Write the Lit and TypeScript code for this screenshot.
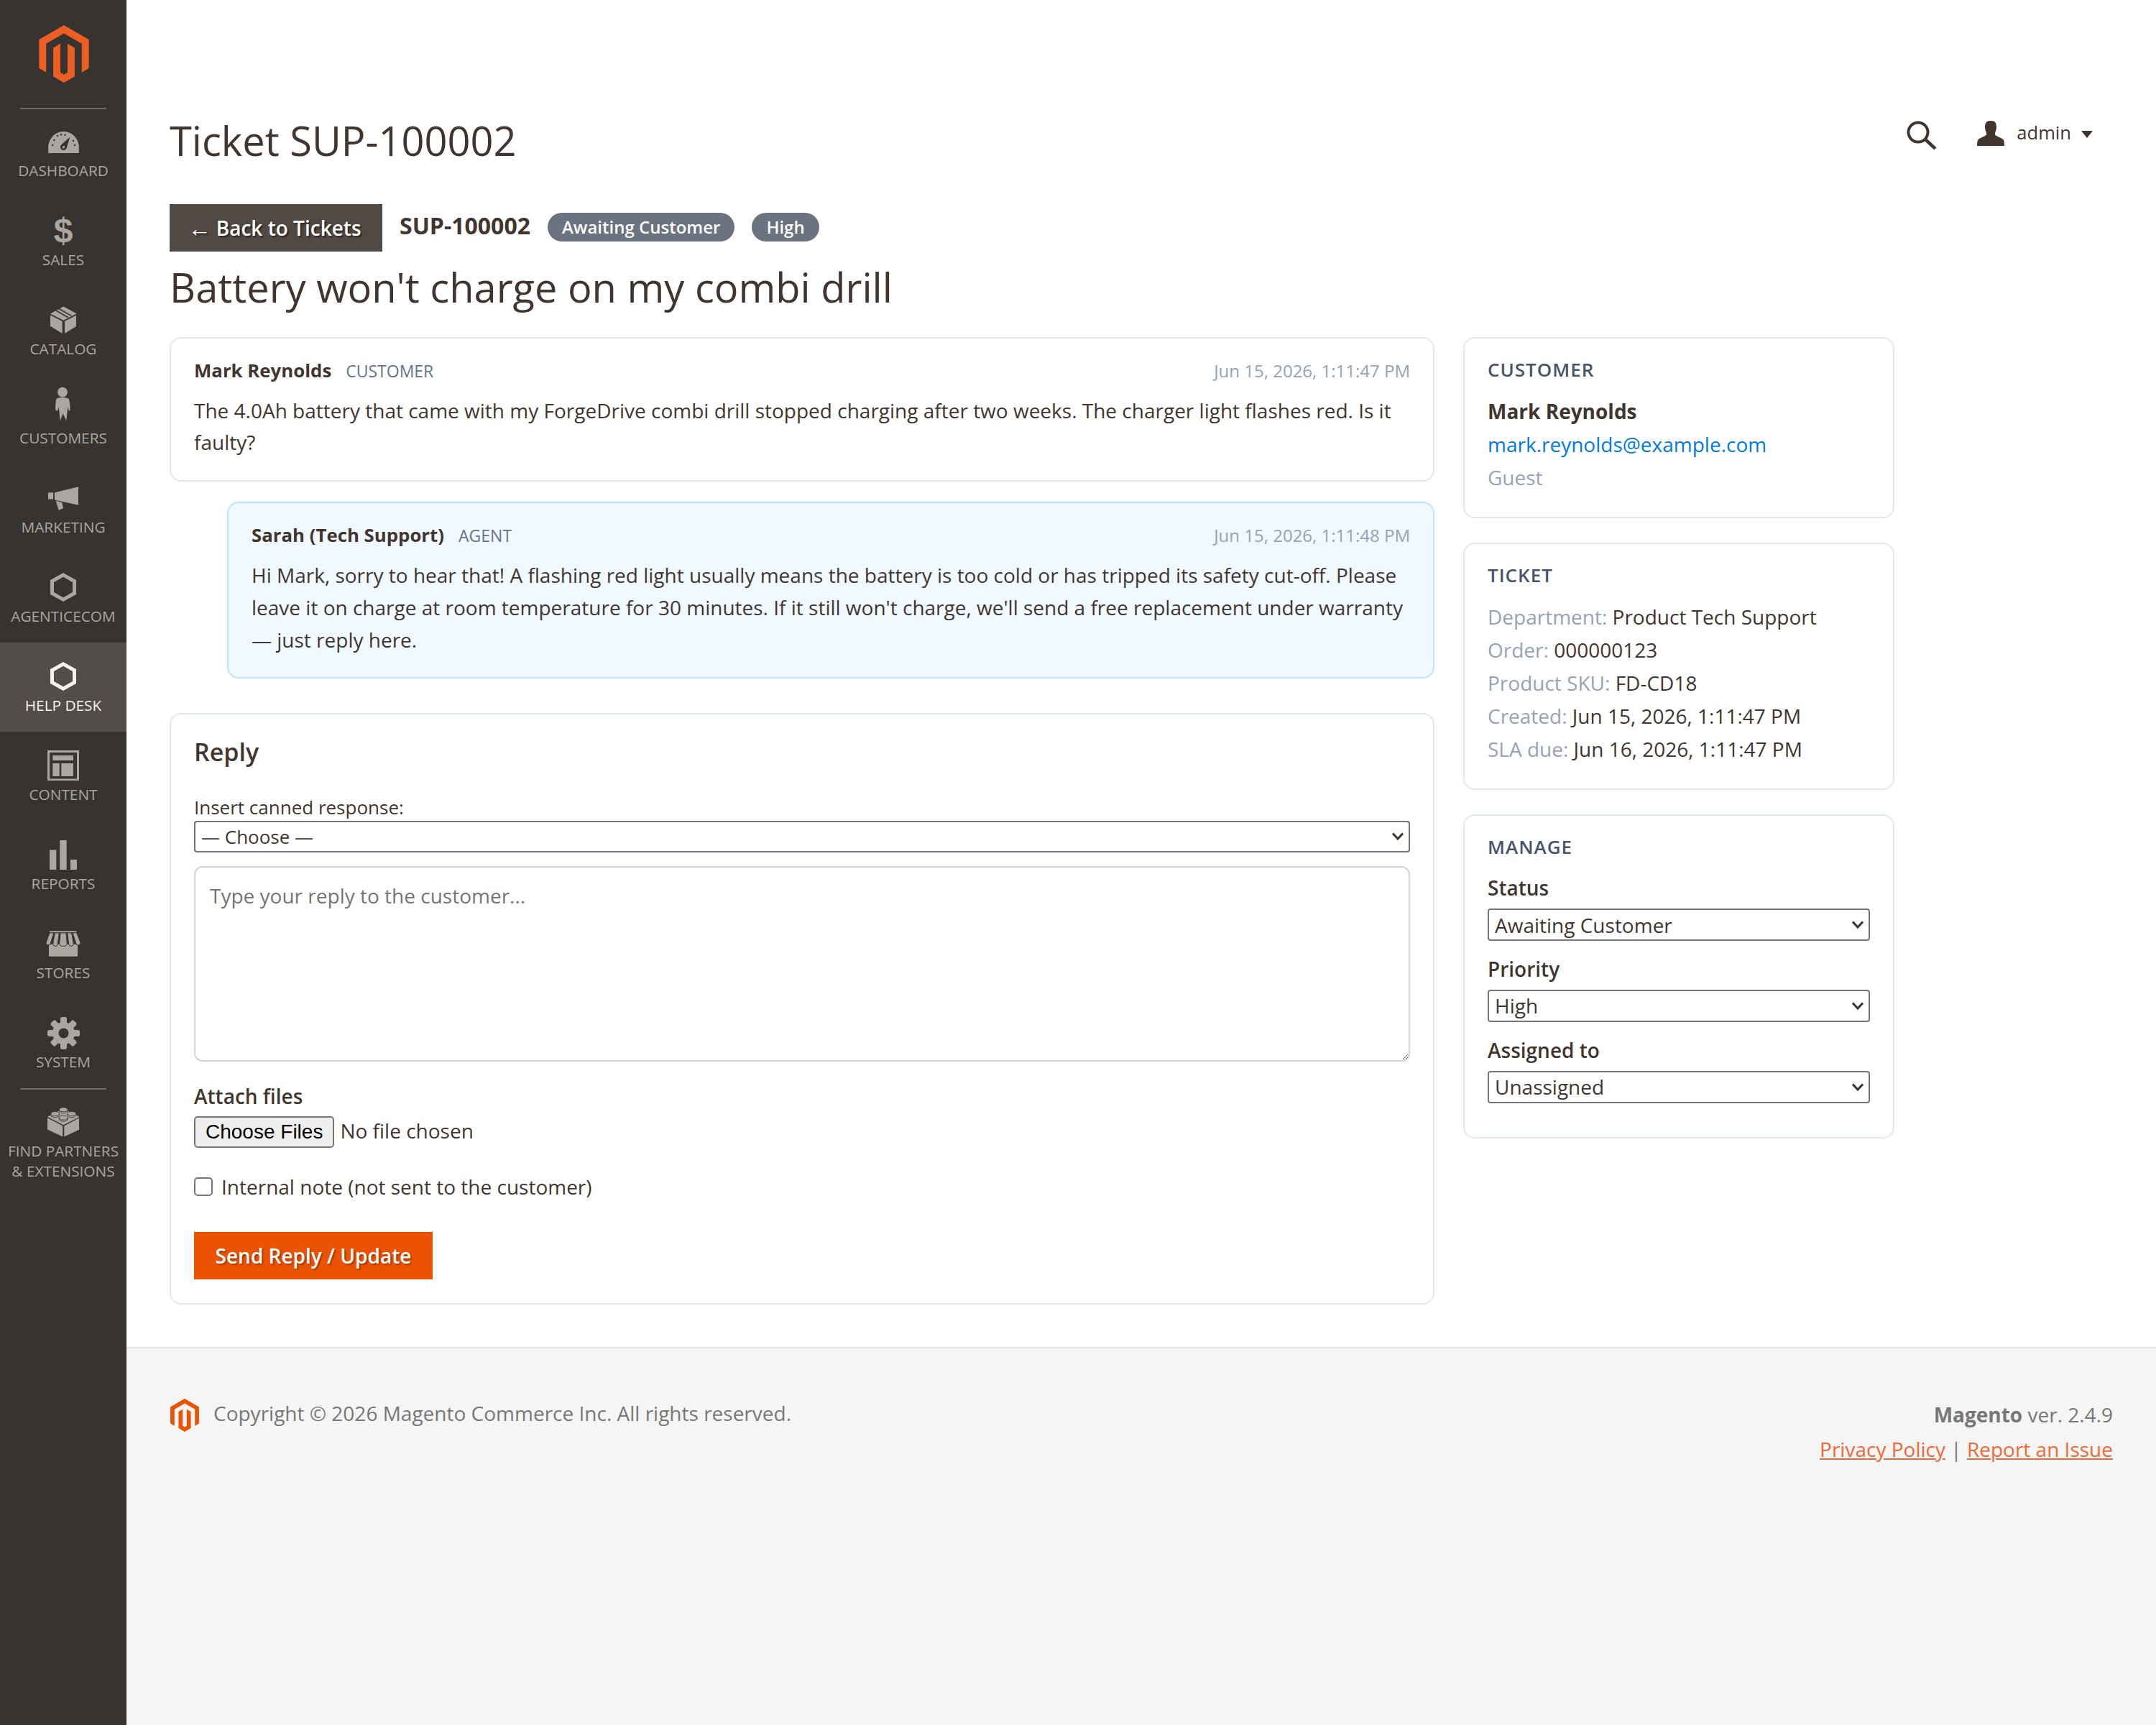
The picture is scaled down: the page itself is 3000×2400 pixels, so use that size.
import { LitElement, html, css, svg } from "lit";
import { customElement } from "lit/decorators.js";

const MAG = "M12 24l-4.455-2.572v-12l2.97-1.715v12.001l1.485.902 1.485-.902V7.713l2.971 1.715v12L12 24zM22.391 6v12l-2.969 1.714V7.713L12 3.43 4.574 7.713v12L1.609 18V6L12 0l10.391 6z";
const BG = "#373330";
const stud = (cx: number, cy: number) => svg`<path fill="currentColor" stroke="${BG}" stroke-width="2.500" d="M${cx - 18} ${cy}v6a18 9 0 0 0 36 0v-6a18 9 0 0 0-36 0a18 9 0 0 0 36 0"/>`;
const teeth = [0, 45, 90, 135, 180, 225, 270, 315];

const icons: Record<string, any> = {
  dash: svg`<svg viewBox="0 0 44 32" width="21.500" height="15.500"><path fill="currentColor" d="M0 32V21C2 9 11 1 22 1s20 8 22 20v11z"/><g fill="${BG}"><circle cx="6" cy="20.700" r="1.300"/><circle cx="8.400" cy="13.500" r="1.300"/><circle cx="13.400" cy="7.300" r="1.300"/><circle cx="18.500" cy="5.500" r="1.300"/><circle cx="24" cy="6" r="1.300"/><circle cx="36" cy="14.500" r="1.300"/><circle cx="38" cy="20.700" r="1.300"/><path d="M31 9L26.500 24.500a4.700 4.700 0 1 1-7.500-5z"/></g><circle cx="22" cy="23.500" r="1.800" fill="currentColor"/></svg>`,
  box: svg`<svg viewBox="0 0 110 113" width="18.300" height="20.200"><path fill="currentColor" d="M55 0L110 30 55 58 0 30zM0 36L50 62V113L0 82zM60 62L110 36V82L60 113z"/><path stroke="${BG}" stroke-width="5" fill="none" d="M37 10L88 39M24 17L75 46"/></svg>`,
  person: svg`<svg class="person" viewBox="0 0 70 145" width="11.700" height="24"><circle cx="33" cy="23" r="21" fill="currentColor"/><path fill="currentColor" d="M8 50Q33 41 58 50Q64 55 65 98L60 102L55 85L49 143L35 113L23 143L17 85L12 102L3 98Q3 55 8 50z"/></svg>`,
  mega: svg`<svg viewBox="0 0 126 98" width="21" height="17.500"><path fill="currentColor" d="M27 24L126 0V77L27 55zM0 24H21V52H0zM32 58L58 66L63 90L44 98z"/></svg>`,
  hex: svg`<svg viewBox="0 0 36 40" width="18" height="20"><path fill="none" stroke="currentColor" stroke-width="5" d="M18 2.900L33.500 11.500V28.500L18 37.100 2.500 28.500V11.500z"/></svg>`,
  content: svg`<svg viewBox="0 0 44 42.500" width="22" height="21.250"><path fill="currentColor" fill-rule="evenodd" d="M0 0H44V42.500H0zM3 3V39.500H41V3zM7.300 7H36V14H7.300zM7.300 18H16.700V36H7.300zM19.300 18H36V36H19.300z"/></svg>`,
  reports: svg`<svg viewBox="0 0 38.300 41" width="19.150" height="20.500"><path fill="currentColor" d="M0 13.500H9.300V41H0zM14.300 0H23.700V41H14.300zM29 27H38.300V41H29z"/></svg>`,
  stores: svg`<svg viewBox="0 0 144 107" width="24" height="19"><path fill="currentColor" d="M16 0H126L128 6H14zM12 56H132V107H12z"/><g fill="currentColor" stroke="${BG}" stroke-width="3"><path d="M15 8H33L19 50A9.500 9.500 0 0 1 0 50z"/><path d="M37 8H55L49 54A9.500 9.500 0 0 1 29 54z"/><path d="M60 8H84L88 54A16 10 0 0 1 56 54z"/><path d="M89 8H107L115 54A9.500 9.500 0 0 1 95 54z"/><path d="M111 8H129L144 50A9.500 9.500 0 0 1 125 50z"/></g></svg>`,
  gear: svg`<svg viewBox="0 0 45 45" width="22.500" height="22.500"><g fill="currentColor">${teeth.map((a) => svg`<rect x="18" y="0" width="9" height="14" rx="2.500" transform="rotate(${a} 22.500 22.500)"/>`)}<circle cx="22.500" cy="22.500" r="15.500"/></g><circle cx="22.500" cy="22.500" r="7" fill="${BG}"/></svg>`,
  lego: svg`<svg viewBox="0 0 134 123" width="22.300" height="22"><path fill="currentColor" d="M67 6L134 40 67 74 0 40zM0 44L64 78V123L0 93zM70 78L134 44V93L70 123z"/>${stud(67, 10)}${stud(32, 27)}${stud(102, 27)}${stud(67, 44)}</svg>`,
};

const NAV = [
  ["dash", "DASHBOARD"], ["$", "SALES"], ["box", "CATALOG"], ["person", "CUSTOMERS"], ["mega", "MARKETING"],
  ["hex", "AGENTICECOM"], ["hex", "HELP DESK"], ["content", "CONTENT"], ["reports", "REPORTS"], ["stores", "STORES"], ["gear", "SYSTEM"],
];

@customElement("app-root")
export class AppRoot extends LitElement {
  static styles = css`
    :host { display: block; zoom: 2; font-family: "Open Sans", sans-serif; font-size: 14px; line-height: 1.6; color: #41362f; }
    * { box-sizing: border-box; }
    .page { display: flex; min-height: 1200px; }
    .side { width: 88px; flex: none; background: #373330; color: #aaa6a0; }
    .logo { height: 75px; display: flex; justify-content: center; padding: 17.5px 0 0 1px; }
    .logo svg { width: 40px; height: 40px; fill: #eb5f22; }
    .sep { height: 1px; background: #736963; margin: 0 14px; }
    .sep.first { margin-bottom: -1px; }
    .item { height: 62px; display: flex; flex-direction: column; align-items: center; padding-top: 12.5px; font-size: 10.4px; line-height: 14px; text-align: center; }
    .item.on { background: #524d49; color: #f7f3eb; }
    .ico { height: 22px; display: flex; align-items: center; justify-content: center; margin-bottom: 2px; }
    .ico .person { margin-top: -7px; }
    .dollar { font: 700 24px/22px "Liberation Sans", sans-serif; }
    .item.last { height: auto; padding-top: 11.5px; }
    .main { flex: 1; display: flex; flex-direction: column; min-width: 0; }
    .content { flex: none; height: 937px; padding: 0 30px; }
    .titlebar { display: flex; justify-content: space-between; height: 142px; padding-top: 78.5px; }
    .title { font-size: 28px; font-weight: 400; line-height: 38px; margin: 0; }
    .tools { display: flex; align-items: center; height: 24px; margin-top: 2px; padding-right: 14px; }
    .tools .search { width: 21px; height: 20px; margin: 3px 28px 0 0; }
    .tools .user { width: 19px; height: 17.5px; margin-right: 8.5px; }
    .tools .name { font-size: 12.8px; }
    .caret { width: 0; height: 0; border: 4px solid transparent; border-top: 5px solid #41362f; border-bottom: 0; margin: 2px 0 0 7px; }
    .bar { display: flex; align-items: center; gap: 12px; height: 33px; }
    .back { background: #514943; color: #fff; font-weight: 600; font-size: 14px; height: 33px; width: 148px; display: flex; align-items: center; justify-content: center; text-shadow: 1px 1px 1px rgba(0,0,0,.5); }
    .arrow { font-weight: 400; font-size: 16px; margin-left: -2px; }
    .tid { font-size: 16px; font-weight: 700; margin-top: -3px; }
    .badge { background: #6b7280; color: #fff; font-size: 12px; font-weight: 600; height: 20px; line-height: 20px; padding: 0 10px; border-radius: 10px; margin-top: -1px; }
    h1 { font-size: 28px; font-weight: 400; margin: 5.5px 0 0; line-height: 38px; }
    .grid { display: grid; grid-template-columns: 880px 300px; gap: 20px; margin-top: 16px; align-items: start; }
    .card { border: 1px solid #e2e8f0; border-radius: 8px; background: #fff; padding: 14px 16px 16px; }
    .msg { margin-bottom: 14px; padding-bottom: 15px; }
    .msg.agent { margin-left: 40px; background: #f0f9ff; border-color: #bae6fd; margin-bottom: 24px; }
    .mh { display: flex; align-items: baseline; gap: 10px; margin-bottom: 8.350px; line-height: 16px; font-size: 12.9px; }
    .mh b { font-weight: 700; }
    .mh .role { font-size: 11.5px; color: #64748b; }
    .mh .date { margin-left: auto; font-size: 12px; color: #94a3b8; }
    .msg p { margin: 0; }
    h2 { font-size: 17px; font-weight: 600; margin: 0 0 17.700px; line-height: 24px; }
    .lab { display: block; font-size: 13px; line-height: 17px; margin-bottom: 1px; }
    select { display: block; appearance: none; font-family: inherit; color: #41362f; background: #fff url("data:image/svg+xml,%3Csvg xmlns='http://www.w3.org/2000/svg' viewBox='0 0 18 13'%3E%3Cpath d='M2 2.500L9 10 16 2.500' fill='none' stroke='%2341362f' stroke-width='3.200'/%3E%3C/svg%3E") no-repeat right 3.250px center / 9px 6.500px; border: 1px solid #767676; border-radius: 2px; padding: 0 16px 0 4px; width: 100%; }
    .canned { font-size: 13px; height: 22px; }
    textarea { display: block; width: 100%; height: 136px; margin-top: 9.500px; border: 1px solid #cbd5e1; border-radius: 6px; padding: 8.500px 10px; font: inherit; }
    textarea::placeholder { color: #757575; }
    .flab { display: block; font-weight: 600; margin-top: 14px; line-height: 20px; }
    input[type=file] { display: block; font: inherit; margin-top: 3px; }
    .chk { display: flex; align-items: center; gap: 6px; margin-top: 16px; }
    .chk input { margin: 0; width: 13px; height: 13px; }
    .send { display: block; margin: 20px 0 0.500px; width: 166px; height: 33px; background: #eb5202; color: #fff; border: 0; font: 600 14px "Open Sans", sans-serif; text-shadow: 1px 1px 1px rgba(0,0,0,.3); }
    .sidecol { display: flex; flex-direction: column; gap: 17px; }
    h3 { font-size: 13px; font-weight: 600; letter-spacing: .5px; color: #475569; margin: -1px 0 9px; line-height: 17px; }
    .row { line-height: 23px; }
    .strong { font-weight: 700; }
    .mut { color: #94a3b8; }
    a { color: #007bdb; text-decoration: none; }
    .mlab { display: block; font-weight: 600; line-height: 22px; margin-bottom: 3.500px; }
    .sel { font-size: 14px; height: 22.500px; margin-bottom: 8.400px; }
    .sel.end { margin-bottom: 7.700px; }
    .foot { flex: 1; border-top: 1px solid #e3e3e3; background: #f5f5f5; padding: 34px 30px 0; display: flex; justify-content: space-between; color: #777; }
    .fl { display: flex; align-items: flex-start; gap: 8.500px; }
    .fl svg { width: 23px; height: 23px; fill: #eb5202; margin: 1px 0 0 -1px; }
    .fr { text-align: right; line-height: 24px; }
    .fr a { color: #f06a35; text-decoration: underline; }
  `;

  render() {
    return html`<div class="page">
      <nav class="side">
        <div class="logo"><svg viewBox="0 0 24 24"><path d="${MAG}"/></svg></div>
        <div class="sep first"></div>
        ${NAV.map(([i, l]) => html`<div class="item ${l === "HELP DESK" ? "on" : ""}"><div class="ico">${i === "$" ? html`<span class="dollar">$</span>` : icons[i]}</div><span>${l}</span></div>`)}
        <div class="sep"></div>
        <div class="item last"><div class="ico">${icons.lego}</div><span>FIND PARTNERS<br />&amp; EXTENSIONS</span></div>
      </nav>
      <div class="main">
        <div class="content">
          <div class="titlebar">
            <div class="title">Ticket SUP-100002</div>
            <div class="tools">
              <svg class="search" viewBox="0 0 42 40"><circle cx="16" cy="16" r="13.500" fill="none" stroke="#41362f" stroke-width="4"/><path d="M26 26l14 13" stroke="#41362f" stroke-width="4.500"/></svg>
              <svg class="user" viewBox="0 0 38 35"><path fill="#41362f" d="M19 0c6 0 8 3 8 9 0 3-1 5-2 8-.5 2 0 3 2 4l8 4c2 1 3 3 3 10H0c0-7 1-9 3-10l8-4c2-1 2.500-2 2-4C12 14 11 12 11 9c0-6 2-9 8-9z"/></svg>
              <span class="name">admin</span><span class="caret"></span>
            </div>
          </div>
          <div class="bar">
            <div class="back"><span class="arrow">←</span>&nbsp;Back to Tickets</div>
            <span class="tid">SUP-100002</span>
            <span class="badge">Awaiting Customer</span>
            <span class="badge">High</span>
          </div>
          <h1>Battery won't charge on my combi drill</h1>
          <div class="grid">
            <div>
              <div class="card msg">
                <div class="mh"><b>Mark Reynolds</b><span class="role">CUSTOMER</span><span class="date">Jun 15, 2026, 1:11:47 PM</span></div>
                <p>The 4.0Ah battery that came with my ForgeDrive combi drill stopped charging after two weeks. The charger light flashes red. Is it faulty?</p>
              </div>
              <div class="card msg agent">
                <div class="mh"><b>Sarah (Tech Support)</b><span class="role">AGENT</span><span class="date">Jun 15, 2026, 1:11:48 PM</span></div>
                <p>Hi Mark, sorry to hear that! A flashing red light usually means the battery is too cold or has tripped its safety cut-off. Please leave it on charge at room temperature for 30 minutes. If it still won't charge, we'll send a free replacement under warranty — just reply here.</p>
              </div>
              <div class="card">
                <h2>Reply</h2>
                <label class="lab">Insert canned response:</label>
                <select class="canned"><option>— Choose —</option></select>
                <textarea placeholder="Type your reply to the customer..."></textarea>
                <label class="flab">Attach files</label>
                <input type="file" multiple />
                <label class="chk"><input type="checkbox" /><span>Internal note (not sent to the customer)</span></label>
                <button class="send">Send Reply / Update</button>
              </div>
            </div>
            <div class="sidecol">
              <div class="card">
                <h3>CUSTOMER</h3>
                <div class="row strong">Mark Reynolds</div>
                <div class="row"><a>mark.reynolds@example.com</a></div>
                <div class="row mut">Guest</div>
              </div>
              <div class="card">
                <h3>TICKET</h3>
                <div class="row"><span class="mut">Department:</span> Product Tech Support</div>
                <div class="row"><span class="mut">Order:</span> 000000123</div>
                <div class="row"><span class="mut">Product SKU:</span> FD-CD18</div>
                <div class="row"><span class="mut">Created:</span> Jun 15, 2026, 1:11:47 PM</div>
                <div class="row"><span class="mut">SLA due:</span> Jun 16, 2026, 1:11:47 PM</div>
              </div>
              <div class="card">
                <h3>MANAGE</h3>
                <label class="mlab">Status</label>
                <select class="sel"><option>Awaiting Customer</option></select>
                <label class="mlab">Priority</label>
                <select class="sel"><option>High</option></select>
                <label class="mlab">Assigned to</label>
                <select class="sel end"><option>Unassigned</option></select>
              </div>
            </div>
          </div>
        </div>
        <footer class="foot">
          <div class="fl"><svg viewBox="0 0 24 24"><path d="${MAG}"/></svg><span>Copyright © 2026 Magento Commerce Inc. All rights reserved.</span></div>
          <div class="fr"><div><b>Magento</b> ver. 2.4.9</div><div><a>Privacy Policy</a> | <a>Report an Issue</a></div></div>
        </footer>
      </div>
    </div>`;
  }
}
